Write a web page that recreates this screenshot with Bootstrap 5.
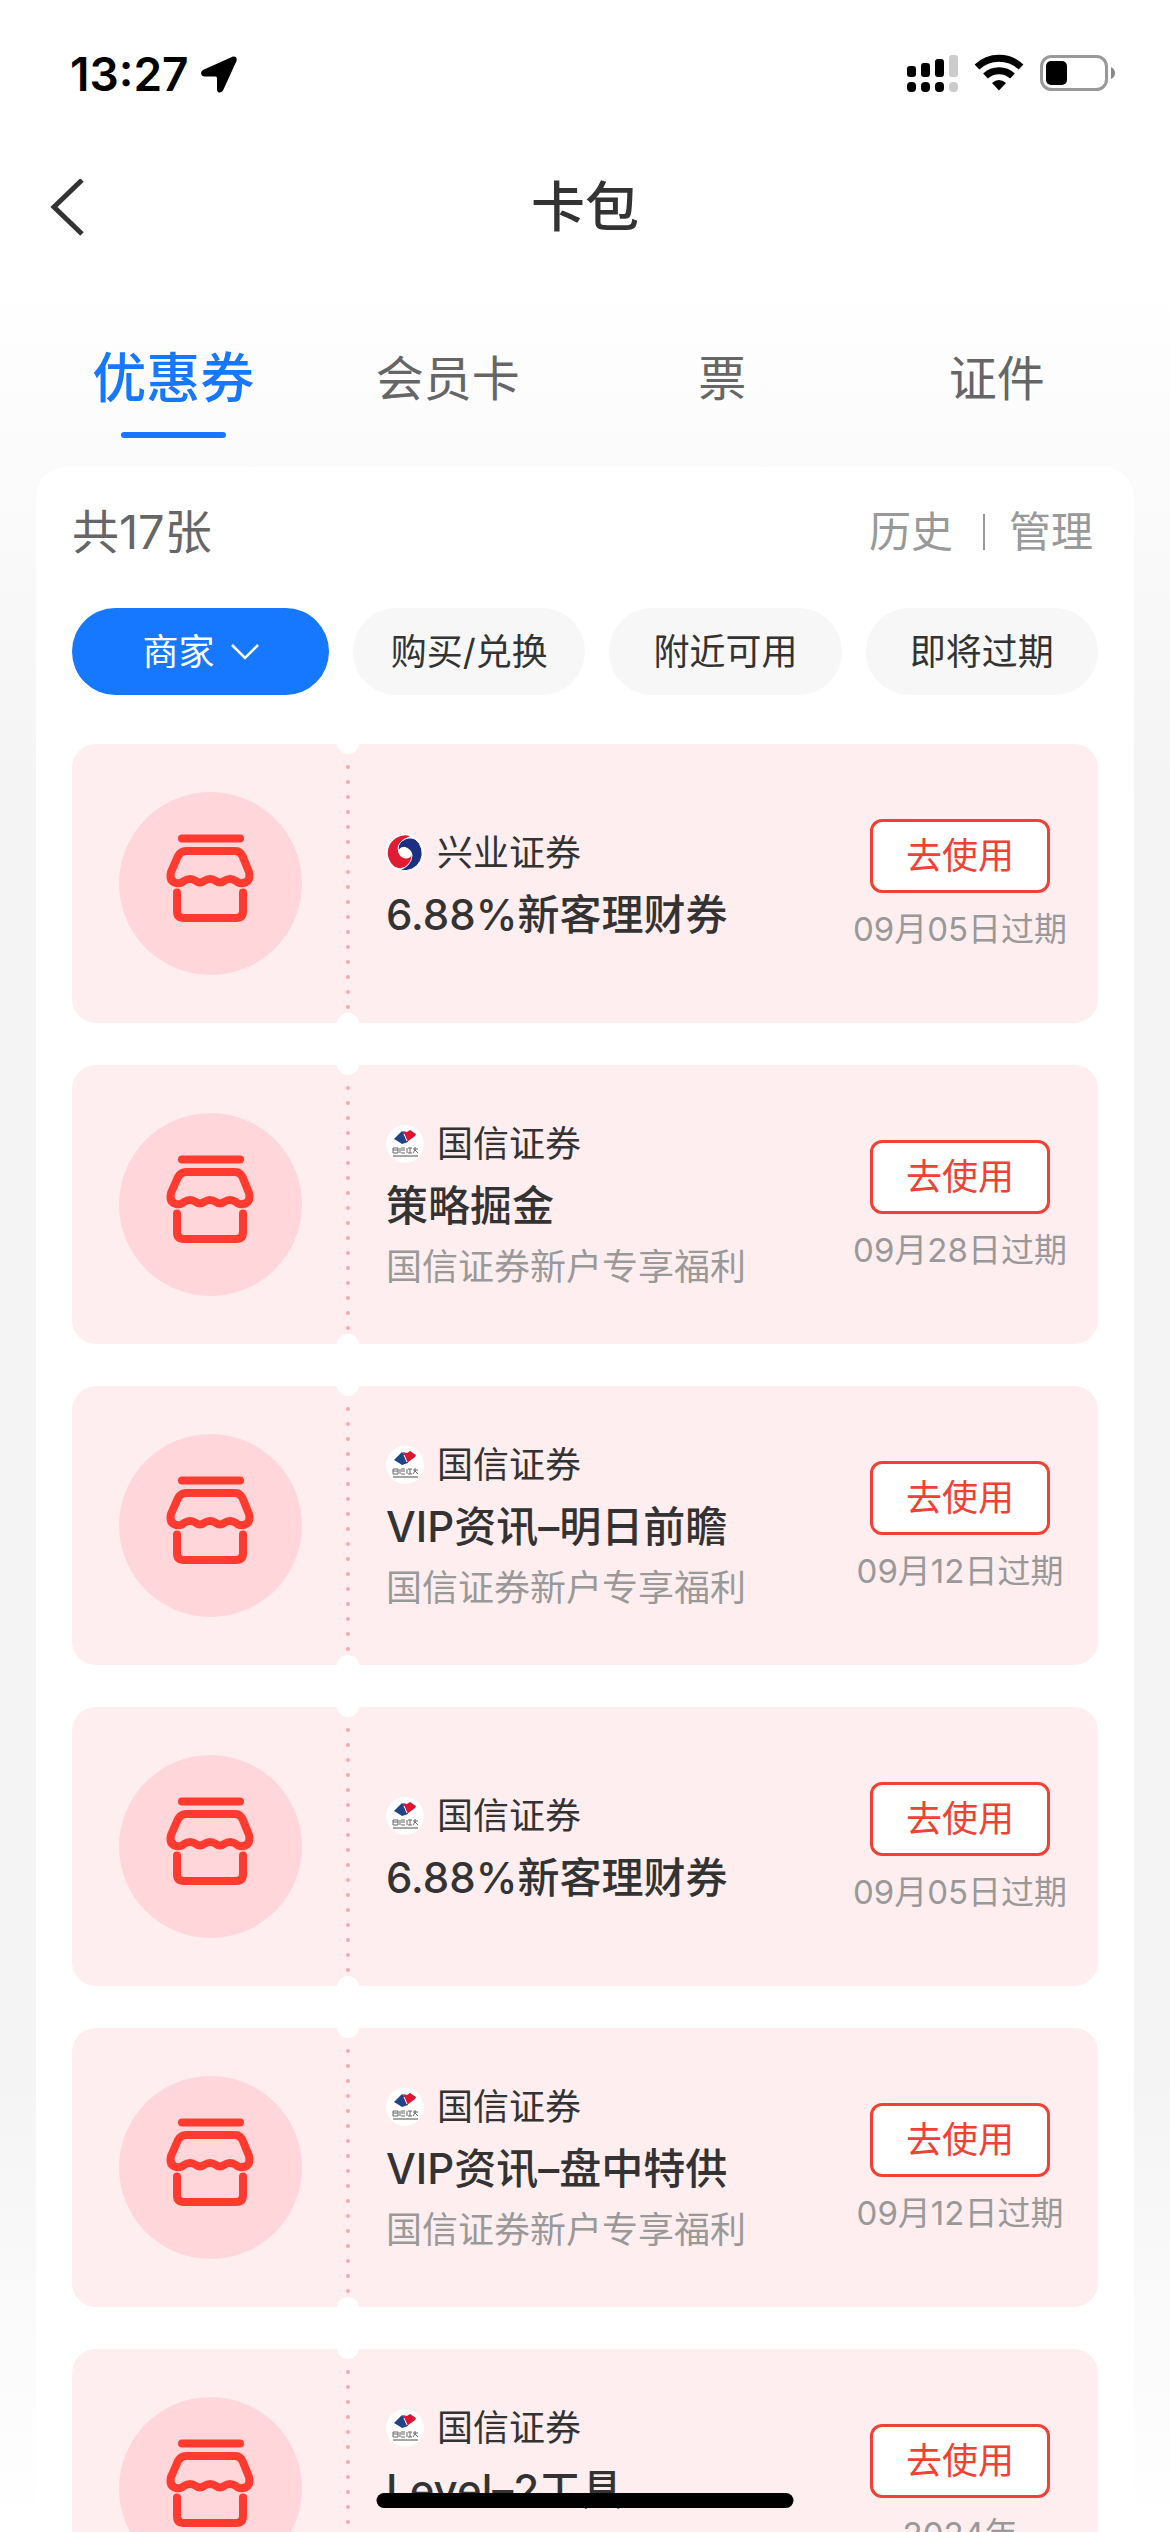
<!DOCTYPE html>
<html lang="zh-CN">
<head>
<meta charset="utf-8">
<meta name="viewport" content="width=device-width, initial-scale=1">
<title>卡包</title>
<link href="https://cdn.jsdelivr.net/npm/bootstrap@5.3.0/dist/css/bootstrap.min.css" rel="stylesheet">
<style>
  :root { --ink: #333; --muted: #999; --blue: #1677ff; --red: #f04134; --pink: #ffeef0; }
  body {
    font-family: Inter, "Noto Sans CJK SC", sans-serif;
    color: var(--ink);
    background: #fff;
  }
  .wallet {
    background: linear-gradient(#fff 0, #fff 280px, #f4f4f4 800px, #f4f4f4 2060px, #fff 2532px);
  }
  .status-bar { height: 148px; padding: 0 54px 0 70px; }
  .clock { font-size: 46px; font-weight: 600; line-height: 60px; color: #000; }
  .top-bar { height: 119px; padding: 0 45px; }
  .top-bar .side { flex: 1 1 0; }
  .page-title { font-size: 54px; font-weight: 500; line-height: 80px; }
  .tabs { padding: 0 36px; height: 200px; }
  .tabs .tab {
    flex: 1 1 0; height: 171px; padding-top: 72px; position: relative;
    font-size: 48px; line-height: 80px; color: #666; text-align: center; text-decoration: none;
  }
  .tabs .tab.active { color: var(--blue); font-size: 54px; font-weight: 500; }
  .tabs .tab.active::after {
    content: ""; position: absolute; left: 50%; bottom: 0; width: 105px; height: 6px;
    margin-left: -52px; border-radius: 3px; background: var(--blue);
  }
  .sheet { margin: 0 36px; padding: 0 36px; border-radius: 30px; background: #fff; }
  .summary { height: 141px; padding: 0 5px 12px 0; }
  .total { font-size: 47px; line-height: 60px; color: #666; }
  .summary a { font-size: 42px; line-height: 60px; color: var(--muted); text-decoration: none; }
  .rule { width: 2px; height: 36px; margin: 0 24px 0 30px; background: var(--muted); }
  .pills { gap: 24px; margin-bottom: 49px; }
  .pill {
    flex: 1 1 0; height: 87px; border: 0; border-radius: 44px; padding: 0;
    font-size: 36px; line-height: 62px; color: var(--ink); background: #f7f7f7; white-space: nowrap;
  }
  .pill.on { flex: 0 0 257px; color: #fff; background: var(--blue); gap: 16px; }
  .coupons { gap: 42px; }
  .coupon { height: 279px; border-radius: 24px; background: var(--pink); }
  .stub { flex: 0 0 276px; }
  .perf {
    width: 0; position: relative;
  }
  .perf::before, .perf::after {
    content: ""; position: absolute; left: -11px; width: 22px; height: 22px;
    border-radius: 50%; background: #fff;
  }
  .perf::before { top: -12px; }
  .perf::after { bottom: -12px; }
  .perf svg { position: absolute; left: -2px; top: 0; }
  .info { padding-left: 38px; }
  .merchant { font-size: 36px; line-height: 62px; gap: 13px; }
  .offer { font-size: 42px; font-weight: 500; line-height: 62px; }
  .note { font-size: 36px; line-height: 60px; color: var(--muted); }
  .action { flex: 0 0 276px; padding-top: 75px; }
  .use {
    width: 180px; height: 74px; padding: 0; border: 3px solid var(--red); border-radius: 12px;
    font-size: 36px; line-height: 62px; color: var(--red); background: #fff;
  }
  .expiry { font-size: 33px; line-height: 40px; margin-top: 16px; color: var(--muted); }
  .home-bar { bottom: 24px; width: 417px; height: 15px; border-radius: 8px; background: #000; }
</style>
</head>
<body>
<svg width="0" height="0" class="position-absolute" aria-hidden="true">
  <defs>
    <symbol id="shop" viewBox="0 0 183 183">
      <circle cx="91.500" cy="91.500" r="91.500" fill="#ffd6da"/>
      <g fill="none" stroke="#ff3b30" stroke-width="8" stroke-linecap="round" stroke-linejoin="round">
        <path d="M63 46.500H121"/>
        <path d="M67 59H116Q121 59 123.500 64L130 80Q132 90 124 91Q120 92 117 89Q111 85 105 89Q101 92 97 89Q91 85 85 89Q81 92 77 89Q71 85 65 89Q62 92 57 91Q50 89 52 80L59 64Q62 59 67 59Z"/>
        <path d="M58 100.500V119Q58 126 65 126H117Q124 126 124 119V100.500"/>
      </g>
    </symbol>
    <symbol id="dots" viewBox="0 0 4 279">
      <path d="M2 23V265" stroke="#f5a9ae" stroke-width="4" stroke-linecap="round" stroke-dasharray="0 15"/>
    </symbol>
    <symbol id="guosen" viewBox="0 0 38 38">
      <circle cx="19" cy="19" r="19" fill="#fff"/>
      <path d="M8 14L16 6L18 8L22 17L16 19L13 17Z" fill="#1f4488"/>
      <path d="M17 6L21 7L24 5L30 9L29 11L21 17L19 12Z" fill="#dc1530"/>
      <path d="M18 9L21 16" stroke="#fff" stroke-width="1"/>
      <path d="M7 23h5v5H7zM7 25h5M14 23v5M15 23h4M15 25h4M15 28h4M21 23v5M22 23h4M24 23v5M22 28h4M27 24h5M29 22v3M27 28l2-3 3 3" fill="none" stroke="#666" stroke-width="1"/>
      <path d="M7 31H32" stroke="#888" stroke-width="1.500"/>
    </symbol>
    <symbol id="xingye" viewBox="0 0 38 38">
      <circle cx="19" cy="19" r="19" fill="#fff"/>
      <path d="M24 2A17.500 17.500 0 0 0 9 33Q16 36 22 31Q27 27 25.500 21Q24 25 19 24.500Q13 23 12 17Q12 7 24 2Z" fill="#df1c33"/>
      <path d="M14 36A17.500 17.500 0 0 0 29 5Q22 2 16 7Q11 11 12.500 17Q14 13 19 13.500Q25 15 26 21Q26 31 14 36Z" fill="#1d2f83" stroke="#fff" stroke-width="1"/>
      <circle cx="19" cy="19" r="4.500" fill="#fff"/>
    </symbol>
  </defs>
</svg>

<div class="wallet vh-100 overflow-hidden position-relative">
  <div class="status-bar d-flex align-items-center justify-content-between">
    <div class="d-flex align-items-center gap-2">
      <span class="clock">13:27</span>
      <svg class="ms-1" width="36" height="37" viewBox="0 0 36 37" aria-hidden="true"><path d="M32 .500Q36.500 0 35.500 5L22 34.500Q20 37.500 17 36Q16 35 16 33V22Q16 20.500 14.500 20.500H3Q-1 19.500 .500 15.500Q1 14.500 3 13.500Z"/></svg>
    </div>
    <svg width="209" height="40" viewBox="0 0 209 40" aria-hidden="true">
      <g>
        <rect x="0" y="12" width="9" height="11" rx="3"/><rect x="14" y="9" width="9" height="14" rx="3"/><rect x="28" y="5" width="9" height="18" rx="3"/>
        <rect x="0" y="28" width="9" height="10" rx="4"/><rect x="14" y="28" width="9" height="10" rx="4"/><rect x="28" y="28" width="9" height="10" rx="4"/>
      </g>
      <g fill="#ccc"><rect x="42" y="1" width="9" height="22" rx="3"/><rect x="42" y="28" width="9" height="10" rx="4"/></g>
      <g fill="none" stroke="#000" stroke-width="7">
        <path d="M70 13A32 32 0 0 1 114 13"/><path d="M78.500 22A20 20 0 0 1 105.500 22"/>
      </g>
      <path d="M85 29Q92 23 99 29L92 36.500Z"/>
      <rect x="134.500" y="2.500" width="65" height="33" rx="10" fill="none" stroke="#999" stroke-width="3"/>
      <rect x="139" y="7" width="21" height="24" rx="5"/>
      <path d="M204 13Q208 15 208 19T204 25Z" fill="#888"/>
    </svg>
  </div>

  <header class="top-bar d-flex align-items-center">
    <div class="side">
      <button type="button" class="btn p-0 border-0 d-block" aria-label="返回">
        <svg class="d-block" width="44" height="58" viewBox="0 0 44 58"><path d="M37 1L9 28L37 55" fill="none" stroke="#333" stroke-width="5"/></svg>
      </button>
    </div>
    <h1 class="page-title m-0">卡包</h1>
    <div class="side"></div>
  </header>

  <nav class="tabs d-flex">
    <a href="#" class="tab active" aria-current="page">优惠券</a>
    <a href="#" class="tab">会员卡</a>
    <a href="#" class="tab">票</a>
    <a href="#" class="tab">证件</a>
  </nav>

  <main class="sheet">
    <div class="summary d-flex align-items-center justify-content-between">
      <span class="total">共17张</span>
      <div class="d-flex align-items-center">
        <a href="#">历史</a><span class="rule"></span><a href="#">管理</a>
      </div>
    </div>
    <div class="pills d-flex">
      <button type="button" class="pill on d-flex align-items-center justify-content-center">商家<svg width="28" height="18" viewBox="0 0 28 18" aria-hidden="true"><path d="M1 2L14 15L27 2" fill="none" stroke="#fff" stroke-width="2.500"/></svg></button>
      <button type="button" class="pill">购买/兑换</button>
      <button type="button" class="pill">附近可用</button>
      <button type="button" class="pill">即将过期</button>
    </div>

    <div class="coupons d-flex flex-column">
      <article class="coupon d-flex">
        <div class="stub d-flex align-items-center justify-content-center"><svg width="183" height="183" aria-hidden="true"><use href="#shop"/></svg></div>
        <div class="perf"><svg width="4" height="279" aria-hidden="true"><use href="#dots"/></svg></div>
        <div class="info flex-grow-1 d-flex flex-column justify-content-center">
          <div class="merchant d-flex align-items-center"><svg width="38" height="38" aria-hidden="true"><use href="#xingye"/></svg>兴业证券</div>
          <h2 class="offer m-0">6.88%新客理财券</h2>
        </div>
        <div class="action d-flex flex-column align-items-center"><button type="button" class="use">去使用</button><div class="expiry">09月05日过期</div></div>
      </article>

      <article class="coupon d-flex">
        <div class="stub d-flex align-items-center justify-content-center"><svg width="183" height="183" aria-hidden="true"><use href="#shop"/></svg></div>
        <div class="perf"><svg width="4" height="279" aria-hidden="true"><use href="#dots"/></svg></div>
        <div class="info flex-grow-1 d-flex flex-column justify-content-center">
          <div class="merchant d-flex align-items-center"><svg width="38" height="38" aria-hidden="true"><use href="#guosen"/></svg>国信证券</div>
          <h2 class="offer m-0">策略掘金</h2>
          <div class="note">国信证券新户专享福利</div>
        </div>
        <div class="action d-flex flex-column align-items-center"><button type="button" class="use">去使用</button><div class="expiry">09月28日过期</div></div>
      </article>

      <article class="coupon d-flex">
        <div class="stub d-flex align-items-center justify-content-center"><svg width="183" height="183" aria-hidden="true"><use href="#shop"/></svg></div>
        <div class="perf"><svg width="4" height="279" aria-hidden="true"><use href="#dots"/></svg></div>
        <div class="info flex-grow-1 d-flex flex-column justify-content-center">
          <div class="merchant d-flex align-items-center"><svg width="38" height="38" aria-hidden="true"><use href="#guosen"/></svg>国信证券</div>
          <h2 class="offer m-0">VIP资讯–明日前瞻</h2>
          <div class="note">国信证券新户专享福利</div>
        </div>
        <div class="action d-flex flex-column align-items-center"><button type="button" class="use">去使用</button><div class="expiry">09月12日过期</div></div>
      </article>

      <article class="coupon d-flex">
        <div class="stub d-flex align-items-center justify-content-center"><svg width="183" height="183" aria-hidden="true"><use href="#shop"/></svg></div>
        <div class="perf"><svg width="4" height="279" aria-hidden="true"><use href="#dots"/></svg></div>
        <div class="info flex-grow-1 d-flex flex-column justify-content-center">
          <div class="merchant d-flex align-items-center"><svg width="38" height="38" aria-hidden="true"><use href="#guosen"/></svg>国信证券</div>
          <h2 class="offer m-0">6.88%新客理财券</h2>
        </div>
        <div class="action d-flex flex-column align-items-center"><button type="button" class="use">去使用</button><div class="expiry">09月05日过期</div></div>
      </article>

      <article class="coupon d-flex">
        <div class="stub d-flex align-items-center justify-content-center"><svg width="183" height="183" aria-hidden="true"><use href="#shop"/></svg></div>
        <div class="perf"><svg width="4" height="279" aria-hidden="true"><use href="#dots"/></svg></div>
        <div class="info flex-grow-1 d-flex flex-column justify-content-center">
          <div class="merchant d-flex align-items-center"><svg width="38" height="38" aria-hidden="true"><use href="#guosen"/></svg>国信证券</div>
          <h2 class="offer m-0">VIP资讯–盘中特供</h2>
          <div class="note">国信证券新户专享福利</div>
        </div>
        <div class="action d-flex flex-column align-items-center"><button type="button" class="use">去使用</button><div class="expiry">09月12日过期</div></div>
      </article>

      <article class="coupon d-flex">
        <div class="stub d-flex align-items-center justify-content-center"><svg width="183" height="183" aria-hidden="true"><use href="#shop"/></svg></div>
        <div class="perf"><svg width="4" height="279" aria-hidden="true"><use href="#dots"/></svg></div>
        <div class="info flex-grow-1 d-flex flex-column justify-content-center">
          <div class="merchant d-flex align-items-center"><svg width="38" height="38" aria-hidden="true"><use href="#guosen"/></svg>国信证券</div>
          <h2 class="offer m-0">Level–2工具</h2>
          <div class="note">&nbsp;</div>
        </div>
        <div class="action d-flex flex-column align-items-center"><button type="button" class="use">去使用</button><div class="expiry">2024年</div></div>
      </article>
    </div>
  </main>

  <div class="home-bar position-absolute start-50 translate-middle-x"></div>
</div>
<script src="https://cdn.jsdelivr.net/npm/bootstrap@5.3.0/dist/js/bootstrap.bundle.min.js"></script>
</body>
</html>
